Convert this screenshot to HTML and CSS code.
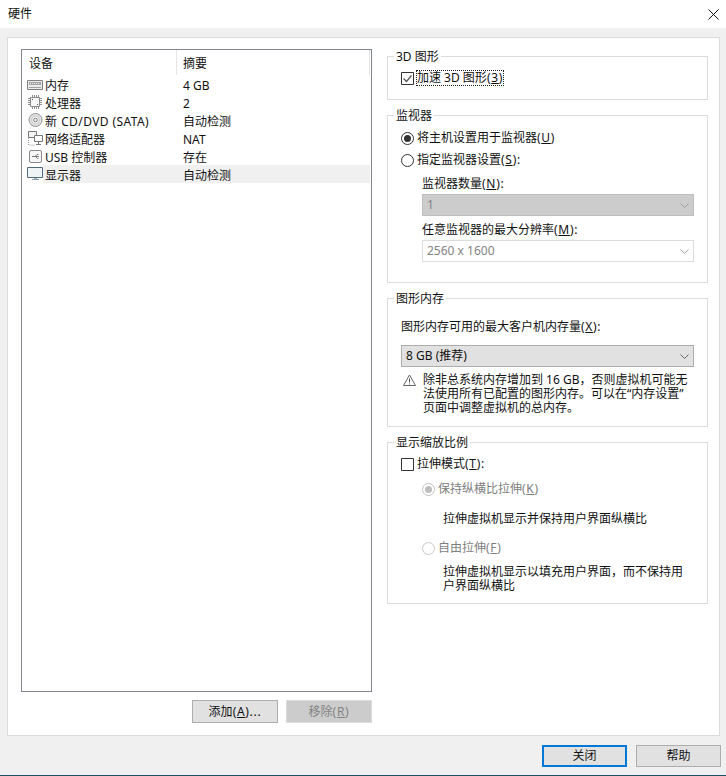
FILE: index.html
```html
<!DOCTYPE html>
<html lang="zh-CN">
<head>
<meta charset="utf-8">
<title>硬件</title>
<link rel="stylesheet" href="styles.css">
</head>
<body>
<div class="window">
  <header class="titlebar">
    <span class="title">硬件</span>
    <svg class="close-x" width="11" height="11" viewBox="0 0 11 11"><path d="M.5.5l10 10M10.500.5l-10 10" stroke="#111" fill="none"/></svg>
  </header>
  <main class="panel">
    <section class="left">
      <div class="list">
        <div class="list-head">
          <div class="head-cell head-device">设备</div>
          <div class="head-cell head-summary">摘要</div>
        </div>
        <div class="row">
          <svg class="icon" width="16" height="18" viewBox="0 0 16 18"><path d="M.5 5.500h15v9h-15z" fill="#ececec" stroke="#808080"/><path d="M2 7h12v3H2z" fill="#a3a3a3"/><path d="M3 8h1v1H3zm2 0h1v1H5zm2 0h1v1H7zm2 0h1v1H9zm2 0h1v1h-1z" fill="#eee"/><path d="M2 12.500h12" stroke="#a0a0a0"/></svg>
          <div class="cells"><span class="name">内存</span><span class="summary">4 GB</span></div>
        </div>
        <div class="row">
          <svg class="icon" width="16" height="18" viewBox="0 0 16 18"><path d="M3.500 4.500h9v9h-9z" fill="#f6f6f6" stroke="#8a8a8a"/><path d="M1 5.500h2M1 7.500h2M1 9.500h2M1 11.500h2M13 5.500h2M13 7.500h2M13 9.500h2M13 11.500h2M5.500 2v2M7.500 2v2M9.500 2v2M11.500 2v2M5.500 14v2M7.500 14v2M9.500 14v2M11.500 14v2" stroke="#8f8f8f"/><path d="M5 6h1v1H5zm5 5h1v1h-1z" fill="#555"/></svg>
          <div class="cells"><span class="name">处理器</span><span class="summary">2</span></div>
        </div>
        <div class="row">
          <svg class="icon" width="16" height="18" viewBox="0 0 16 18"><circle cx="8.500" cy="9" r="6.500" fill="#e4e4e4" stroke="#8f8f8f"/><circle cx="8.500" cy="9" r="4" fill="#f8f8f8" stroke="#c4c4c4"/><circle cx="8.500" cy="9" r="1.800" fill="#fff" stroke="#707070"/></svg>
          <div class="cells"><span class="name">新 <span class="wide">CD/DVD (SATA)</span></span><span class="summary">自动检测</span></div>
        </div>
        <div class="row">
          <svg class="icon" width="16" height="18" viewBox="0 0 16 18"><path d="M1.500 2.500h8v6h-8z" fill="#f4f4f4" stroke="#777"/><path d="M7.500 6.500h8v6h-8z" fill="#fff" stroke="#777"/><path d="M11.500 12.500v3M9 15.500h5" stroke="#777" fill="none"/><path d="M1.500 9v7h6" stroke="#999" stroke-dasharray="1 1" fill="none"/></svg>
          <div class="cells"><span class="name">网络适配器</span><span class="summary">NAT</span></div>
        </div>
        <div class="row">
          <svg class="icon" width="16" height="18" viewBox="0 0 16 18"><rect x="2.500" y="3.500" width="12" height="12" rx="1.500" fill="#f6f6f6" stroke="#8a8a8a"/><path d="M5 9.500h7M8 9.500l2-2h1.500M8.500 9.500l2 2h1" stroke="#777" fill="none"/></svg>
          <div class="cells"><span class="name">USB 控制器</span><span class="summary">存在</span></div>
        </div>
        <div class="row">
          <svg class="icon" width="16" height="18" viewBox="0 0 16 18"><path d="M.5 2.500h15v10H.5z" fill="#eef3f6" stroke="#54697b"/><path d="M7 13h3v1H7z" fill="#a9b8c4"/><path d="M5 14.500h7" stroke="#8aa0b0"/></svg>
          <div class="cells selected"><span class="name">显示器</span><span class="summary">自动检测</span></div>
        </div>
      </div>
      <div class="list-actions">
        <button class="btn btn-add" type="button">添加<span class="mn">(<u>A</u>)...</span></button>
        <button class="btn btn-off" type="button">移除<span class="mn">(<u>R</u>)</span></button>
      </div>
    </section>
    <section class="right">
      <fieldset class="group group-3d">
        <legend>3D 图形</legend>
        <label class="option">
          <svg class="box" width="13" height="13" viewBox="0 0 13 13"><path d="M.5.5h12v12H.5z" fill="#fff" stroke="#333"/><path d="M2.500 6.500l3 3 5-6" fill="none" stroke="#555" stroke-width="1.200"/></svg>
          <span class="focus-text">加速 3D 图形<span class="mn">(<u>3</u>)</span></span>
        </label>
      </fieldset>
      <fieldset class="group group-monitor">
        <legend>监视器</legend>
        <label class="option">
          <svg class="box" width="13" height="13" viewBox="0 0 13 13"><circle cx="6.500" cy="6.500" r="6" fill="#fff" stroke="#333"/><circle cx="6.500" cy="6.500" r="3.500" fill="#333"/></svg>
          <span>将主机设置用于监视器<span class="mn">(<u>U</u>)</span></span>
        </label>
        <label class="option opt-second">
          <svg class="box" width="13" height="13" viewBox="0 0 13 13"><circle cx="6.500" cy="6.500" r="6" fill="#fff" stroke="#333"/></svg>
          <span>指定监视器设置<span class="mn">(<u>S</u>):</span></span>
        </label>
        <div class="sub">
          <div class="sub-label sub-label-first">监视器数量<span class="mn">(<u>N</u>):</span></div>
          <div class="select select-off"><span>1</span><svg class="chev" width="9" height="5" viewBox="0 0 9 5"><path d="M.5.500l4 4 4-4" fill="none" stroke="#a0a0a0"/></svg></div>
          <div class="sub-label sub-label-second">任意监视器的最大分辨率<span class="mn">(<u>M</u>):</span></div>
          <div class="select select-ghost"><span>2560 x 1600</span><svg class="chev" width="9" height="5" viewBox="0 0 9 5"><path d="M.5.500l4 4 4-4" fill="none" stroke="#a0a0a0"/></svg></div>
        </div>
      </fieldset>
      <fieldset class="group group-memory">
        <legend>图形内存</legend>
        <div class="mem-label">图形内存可用的最大客户机内存量<span class="mn">(<u>X</u>):</span></div>
        <div class="select select-on"><span>8 GB (推荐)</span><svg class="chev" width="9" height="5" viewBox="0 0 9 5"><path d="M.5.500l4 4 4-4" fill="none" stroke="#666"/></svg></div>
        <div class="warning">
          <svg class="warn-icon" width="13" height="12" viewBox="0 0 13 12"><path d="M6.500 1L12.500 11.500H.5z" fill="#fff" stroke="#666"/><path d="M6.500 4.500v4M6.500 9.500v1" stroke="#555"/></svg>
          <p>除非总系统内存增加到 16 GB，否则虚拟机可能无法使用所有已配置的图形内存。可以在“内存设置”页面中调整虚拟机的总内存。</p>
        </div>
      </fieldset>
      <fieldset class="group group-scale">
        <legend>显示缩放比例</legend>
        <label class="option">
          <svg class="box" width="13" height="13" viewBox="0 0 13 13"><path d="M.5.5h12v12H.5z" fill="#fff" stroke="#333"/></svg>
          <span>拉伸模式<span class="mn">(<u>T</u>):</span></span>
        </label>
        <div class="scale-sub">
          <label class="option option-off opt-keep">
            <svg class="box" width="13" height="13" viewBox="0 0 13 13"><circle cx="6.500" cy="6.500" r="6" fill="#fff" stroke="#c0c0c0"/><circle cx="6.500" cy="6.500" r="3.500" fill="#bdbdbd"/></svg>
            <span>保持纵横比拉伸<span class="mn">(<u>K</u>)</span></span>
          </label>
          <p class="desc desc-keep">拉伸虚拟机显示并保持用户界面纵横比</p>
          <label class="option option-off opt-free">
            <svg class="box" width="13" height="13" viewBox="0 0 13 13"><circle cx="6.500" cy="6.500" r="6" fill="#fff" stroke="#c8c8c8"/></svg>
            <span>自由拉伸<span class="mn">(<u>F</u>)</span></span>
          </label>
          <p class="desc desc-free">拉伸虚拟机显示以填充用户界面，而不保持用户界面纵横比</p>
        </div>
      </fieldset>
    </section>
  </main>
  <footer class="footer">
    <button class="btn btn-primary" type="button">关闭</button>
    <button class="btn btn-help" type="button">帮助</button>
  </footer>
</div>
</body>
</html>
```
FILE: styles.css
```css
* { box-sizing: border-box; }
html, body { margin: 0; padding: 0; }
body {
  width: 726px;
  height: 776px;
  overflow: hidden;
  font: 12px/16px "Noto Sans", "Noto Sans CJK SC", sans-serif;
  color: #111;
}
.window {
  width: 726px;
  height: 776px;
  display: flex;
  flex-direction: column;
  background: #f0f0f0;
  border-bottom: 1px solid #1d4f63;
}
.titlebar {
  height: 28px;
  flex: none;
  background: #fff;
  display: flex;
  align-items: center;
  justify-content: space-between;
  padding: 0 7px 0 8px;
}
.title { font-size: 12px; }
.panel {
  height: 699px;
  flex: none;
  margin: 9px 6px 0 7px;
  padding: 10px 10px 0 13px;
  background: #fff;
  border: 1px solid #dcdcdc;
  display: flex;
}
.left { width: 351px; flex: none; padding-top: 1px; }
.list {
  height: 643px;
  border: 1px solid #82878f;
  background: #fff;
}
.list-head { height: 25px; display: flex; }
.head-cell { height: 25px; padding-top: 6px; border-right: 1px solid #e5e5e5; }
.head-device { width: 155px; padding-left: 7px; }
.head-summary { width: 193px; padding-left: 6px; }
.row { height: 18px; display: flex; padding-left: 5px; }
.icon { flex: none; }
.cells { width: 327px; display: flex; padding: 3px 0 0 1px; height: 18px; line-height: 16px; }
.cells.selected { background: #f0f0f0; }
.name { width: 139px; padding-left: 1px; white-space: nowrap; }
.summary { white-space: nowrap; }
.wide { letter-spacing: .4px; margin-left: 1px; }
.mn { letter-spacing: .7px; }
.list-actions { display: flex; justify-content: flex-end; gap: 8px; margin-top: 8px; }
.btn {
  font: inherit;
  color: #111;
  width: 86px;
  height: 23px;
  padding: 0;
  background: #e1e1e1;
  border: 1px solid #adadad;
}
.btn-off { background: #cccccc; border-color: #dcdcdc; color: #838383; }
.right { width: 321px; flex: none; margin-left: 15px; }
.group {
  margin: 0 0 7px;
  padding: 0 13px;
  border: 1px solid #dcdcdc;
  min-width: 0;
}
.group legend {
  margin-left: -7px;
  padding: 0 2px;
  font-size: 12px;
  line-height: 16px;
  position: relative;
  top: 1px;
}
.group-3d { height: 52px; padding-top: 6px; }
.group-monitor { height: 176px; padding-top: 7px; }
.group-memory { height: 137px; padding-top: 3px; }
.group-scale { height: 170px; padding-top: 6px; }
.option { display: flex; align-items: center; height: 16px; gap: 3px; }
.box { flex: none; }
.option .focus-text { outline: 1px dotted #222; outline-offset: -1px; padding: 0 1px; margin-left: -1px; }
.opt-second { margin-top: 6px; }
.sub { margin-left: 21px; width: 272px; }
.sub-label-first { margin-top: 8px; }
.sub-label-second { margin-top: 6px; }
.select {
  height: 22px;
  border: 1px solid #dcdcdc;
  display: flex;
  align-items: center;
  justify-content: space-between;
  padding: 0 4px 0 4px;
  margin-top: 2px;
  color: #838383;
}
.select-off { background: #cccccc; border-color: #bfbfbf; }
.select-ghost { background: #fff; }
.select-on { background: #e1e1e1; border-color: #adadad; color: #111; width: 293px; margin-top: 10px; }
.mem-label { margin-top: 10px; }
.warning { display: flex; margin-top: 6px; }
.warn-icon { flex: none; margin: 1px 7px 0 2px; }
.warning p { margin: 0; width: 271px; line-height: 14px; }
.scale-sub { margin-left: 21px; }
.option-off { color: #7e7e7e; }
.opt-keep { margin-top: 9px; }
.desc { margin: 0; padding-left: 21px; line-height: 14px; }
.desc-keep { margin-top: 15px; }
.opt-free { margin-top: 14px; }
.desc-free { margin-top: 9px; width: 270px; }
.footer { display: flex; justify-content: flex-end; gap: 9px; padding: 9px 5px 0 0; }
.btn-primary { width: 85px; height: 22px; border: 2px solid #0078d7; }
.btn-help { width: 85px; height: 22px; }
```
